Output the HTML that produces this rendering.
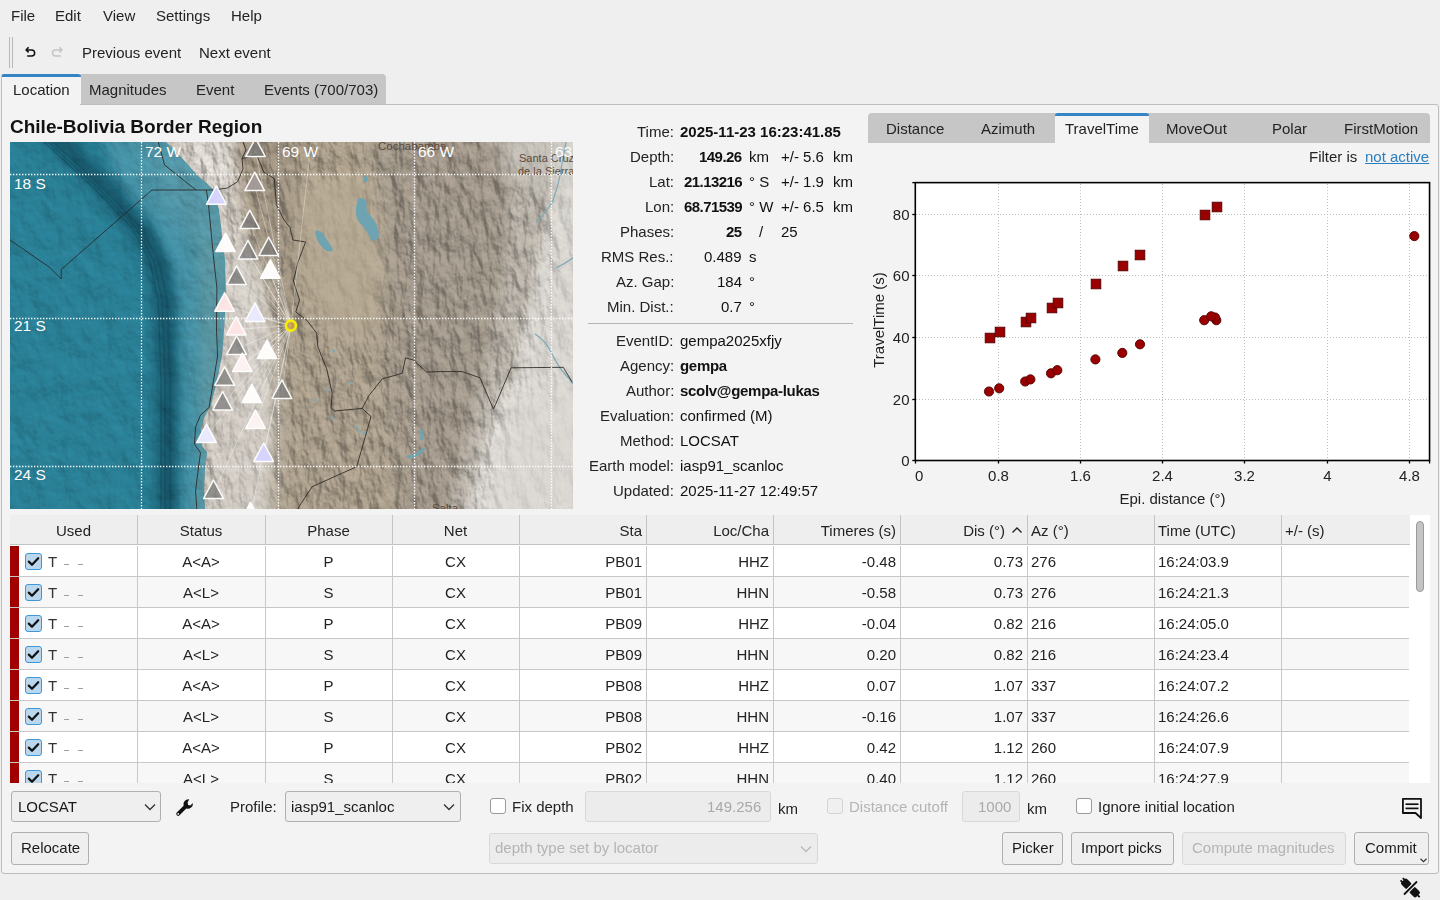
<!DOCTYPE html>
<html><head><meta charset="utf-8">
<style>
*{box-sizing:border-box;margin:0;padding:0}
html,body{width:1440px;height:900px;overflow:hidden;background:#efefef;font-family:"Liberation Sans",sans-serif;font-size:15px;color:#232323}
.a{position:absolute;white-space:nowrap}
.t{position:absolute;white-space:nowrap;line-height:18px;will-change:transform}
.r{text-align:right}
.c{text-align:center}
.b{font-weight:bold}
</style></head><body>
<!-- menubar -->
<div class="t" style="left:11px;top:7px">File</div>
<div class="t" style="left:55px;top:7px">Edit</div>
<div class="t" style="left:103px;top:7px">View</div>
<div class="t" style="left:156px;top:7px">Settings</div>
<div class="t" style="left:231px;top:7px">Help</div>
<!-- toolbar -->
<div class="a" style="left:9px;top:37px;width:1px;height:31px;background:#b8b8b8"></div>
<div class="a" style="left:12px;top:37px;width:1px;height:31px;background:#b8b8b8"></div>
<svg class="a" style="left:20px;top:40px" width="50" height="24" viewBox="20 40 50 24">
<path d="M28.6,47.2 L26.2,49.9 L28.6,52.4" fill="none" stroke="#111" stroke-width="1.6" stroke-linejoin="miter"/>
<path d="M26.6,49.9 H31.6 A3.05,3.05 0 0 1 31.6,56 H27.2" fill="none" stroke="#111" stroke-width="1.5"/>
<path d="M59.4,47.2 L61.8,49.9 L59.4,52.4" fill="none" stroke="#c4c4c4" stroke-width="1.6"/>
<path d="M61.4,49.9 H55.6 A3.05,3.05 0 0 0 55.6,56 H60.8" fill="none" stroke="#c4c4c4" stroke-width="1.5"/>
</svg>
<div class="t" style="left:82px;top:44px">Previous event</div>
<div class="t" style="left:199px;top:44px">Next event</div>

<!-- main tabs -->
<div class="a" style="left:80px;top:74px;width:306px;height:30px;background:#c6c6c6;border-radius:0 4px 0 0"></div>
<div class="a" style="left:1px;top:74px;width:80px;height:31px;background:#f3f3f3;border-top:3px solid #3584c6;border-left:1px solid #bdbdbd;border-radius:3px 3px 0 0"></div>
<div class="t" style="left:13px;top:81px">Location</div>
<div class="t" style="left:89px;top:81px">Magnitudes</div>
<div class="t" style="left:196px;top:81px">Event</div>
<div class="t" style="left:264px;top:81px">Events (700/703)</div>

<!-- panel -->
<div class="a" style="left:1px;top:104px;width:1438px;height:770px;background:#f3f3f3;border:1px solid #bdbdbd;border-radius:0 3px 3px 3px"></div>
<div class="a" style="left:2px;top:103px;width:78px;height:3px;background:#f3f3f3"></div>

<div class="t b" style="left:10px;top:116px;font-size:19px;line-height:22px;color:#111">Chile-Bolivia Border Region</div>

<div id="map" class="a" style="left:10px;top:142px;width:563px;height:367px;background:#3a8598;overflow:hidden"><svg width="563" height="367" viewBox="0 0 563 367" style="position:absolute;left:0;top:0;display:block">
<defs>
<filter id="b3" filterUnits="userSpaceOnUse" x="-60" y="-60" width="683" height="487"><feGaussianBlur stdDeviation="3"/></filter>
<filter id="b6" filterUnits="userSpaceOnUse" x="-60" y="-60" width="683" height="487"><feGaussianBlur stdDeviation="6"/></filter>
<filter id="b10" filterUnits="userSpaceOnUse" x="-60" y="-60" width="683" height="487"><feGaussianBlur stdDeviation="10"/></filter>
<filter id="b16" filterUnits="userSpaceOnUse" x="-60" y="-60" width="683" height="487"><feGaussianBlur stdDeviation="16"/></filter>
<filter id="texL" filterUnits="userSpaceOnUse" x="-60" y="-60" width="683" height="487"><feTurbulence type="turbulence" baseFrequency="0.11 0.035" numOctaves="3" seed="11"/><feColorMatrix type="matrix" values="0 0 0 0 0.36  0 0 0 0 0.32  0 0 0 0 0.27  2.2 0 0 0 -0.25"/></filter>
<filter id="texH" filterUnits="userSpaceOnUse" x="-60" y="-60" width="683" height="487"><feTurbulence type="fractalNoise" baseFrequency="0.06 0.06" numOctaves="3" seed="5"/><feColorMatrix type="matrix" values="0 0 0 0 0.4  0 0 0 0 0.35  0 0 0 0 0.3  2.5 0 0 0 -1.3"/></filter>
<filter id="texO" filterUnits="userSpaceOnUse" x="-60" y="-60" width="683" height="487"><feTurbulence type="fractalNoise" baseFrequency="0.09" numOctaves="4" seed="2"/><feColorMatrix type="matrix" values="0 0 0 0 0.05  0 0 0 0 0.28  0 0 0 0 0.34  1.8 0 0 0 -0.8"/></filter>
<filter id="reliefL" filterUnits="userSpaceOnUse" x="-60" y="-60" width="683" height="487"><feTurbulence type="fractalNoise" baseFrequency="0.09 0.04" numOctaves="5" seed="9" result="n"/><feDiffuseLighting in="n" surfaceScale="7" diffuseConstant="1" lighting-color="#ffffff" result="l"><feDistantLight azimuth="300" elevation="40"/></feDiffuseLighting><feComposite in="l" in2="SourceGraphic" operator="arithmetic" k1="0.75" k2="0" k3="0.5" k4="0"/></filter>
<filter id="reliefO" filterUnits="userSpaceOnUse" x="-60" y="-60" width="683" height="487"><feTurbulence type="fractalNoise" baseFrequency="0.05 0.04" numOctaves="4" seed="4" result="n"/><feDiffuseLighting in="n" surfaceScale="4" diffuseConstant="1" lighting-color="#ffffff" result="l"><feDistantLight azimuth="300" elevation="45"/></feDiffuseLighting><feComposite in="l" in2="SourceGraphic" operator="arithmetic" k1="0.6" k2="0" k3="0.58" k4="0"/></filter>
<linearGradient id="oc" x1="0" y1="0" x2="1" y2="0">
<stop offset="0" stop-color="#2a7e93"/><stop offset="0.45" stop-color="#2e8398"/><stop offset="0.8" stop-color="#3a8da2"/><stop offset="1" stop-color="#4a98aa"/></linearGradient>
<clipPath id="landclip"><polygon points="156.0,0.0 172.0,16.0 187.0,33.0 203.0,47.0 209.0,68.0 212.0,93.0 215.0,118.0 216.0,158.0 214.0,188.0 212.0,214.0 206.0,243.0 201.0,263.0 194.0,276.0 191.0,288.0 192.0,304.0 197.0,310.0 195.0,328.0 194.0,348.0 195.0,367.0 563.0,367.0 563.0,0.0"/></clipPath>
<clipPath id="oceanclip"><polygon points="0.0,0.0 156.0,0.0 172.0,16.0 187.0,33.0 203.0,47.0 209.0,68.0 212.0,93.0 215.0,118.0 216.0,158.0 214.0,188.0 212.0,214.0 206.0,243.0 201.0,263.0 194.0,276.0 191.0,288.0 192.0,304.0 197.0,310.0 195.0,328.0 194.0,348.0 195.0,367.0 0.0,367.0"/></clipPath>
</defs>
<g clip-path="url(#oceanclip)"><g filter="url(#reliefO)">
<rect x="-10" y="-10" width="583" height="387" fill="#2a7f95"/>
<polygon points="90.0,-12.0 220.0,-12.0 222.0,378.0 168.0,378.0 168.0,238.0 165.0,158.0 158.0,120.0 142.0,86.0 112.0,50.0" fill="#4490a4" opacity="1" filter="url(#b6)"/>
<polygon points="165.0,-12.0 220.0,-12.0 222.0,378.0 190.0,378.0 188.0,158.0 180.0,78.0" fill="#54939f" opacity="0.75" filter="url(#b6)"/>
<polygon points="188.0,43.0 220.0,43.0 220.0,378.0 188.0,378.0 193.0,158.0" fill="#5e98a4" opacity="0.6" filter="url(#b3)"/>
<polygon points="130.0,-12.0 190.0,-12.0 210.0,48.0 212.0,98.0 180.0,98.0 150.0,58.0" fill="#5697a7" opacity="0.8" filter="url(#b10)"/>
<polyline points="35.0,-12.0 50.0,0.0 98.0,50.0 131.0,90.0 147.0,123.0 154.0,158.0 156.0,238.0 156.0,378.0" fill="none" stroke="#1a6174" stroke-width="24" opacity="1" filter="url(#b6)"/>
<polyline points="37.0,-12.0 52.0,0.0 100.0,51.0 133.0,91.0 149.0,124.0 156.0,160.0 159.0,238.0 159.0,378.0" fill="none" stroke="#145366" stroke-width="9" opacity="0.8" filter="url(#b3)"/>
<polyline points="34.0,0.0 84.0,46.0 122.0,86.0 140.0,120.0 148.0,158.0 151.0,238.0 151.0,378.0" fill="none" stroke="#104b5b" stroke-width="1.3" opacity="0.55"/>
<polyline points="38.0,0.0 88.0,46.0 126.0,86.0 144.0,120.0 152.0,158.0 155.0,238.0 155.0,378.0" fill="none" stroke="#104b5b" stroke-width="1.3" opacity="0.55"/>
<polyline points="43.0,0.0 93.0,46.0 131.0,86.0 149.0,120.0 157.0,158.0 160.0,238.0 160.0,378.0" fill="none" stroke="#104b5b" stroke-width="1.3" opacity="0.55"/>
</g></g>
<g clip-path="url(#landclip)"><g filter="url(#reliefL)">
<rect x="-10" y="-10" width="583" height="387" fill="#ab9f8b"/>
<polygon points="362.0,-12.0 538.0,-12.0 530.0,108.0 510.0,204.0 485.0,278.0 472.0,378.0 390.0,378.0 375.0,278.0 370.0,188.0 362.0,108.0" fill="#a1978a" opacity="0.9" filter="url(#b10)"/>
<polygon points="410.0,58.0 520.0,48.0 510.0,188.0 480.0,258.0 430.0,258.0 410.0,158.0" fill="#9f978a" opacity="0.5" filter="url(#b16)"/>
<polygon points="498.0,-12.0 560.0,-12.0 538.0,108.0 516.0,198.0 494.0,278.0 474.0,378.0 436.0,378.0 458.0,288.0 484.0,188.0 498.0,98.0" fill="#bdb8b0" opacity="0.75" filter="url(#b6)"/>
<polygon points="546.0,-12.0 590.0,-12.0 590.0,378.0 456.0,378.0 478.0,298.0 502.0,238.0 520.0,158.0 538.0,78.0" fill="#d8d5d0" filter="url(#b6)"/>
<polygon points="490.0,253.0 590.0,238.0 590.0,378.0 470.0,378.0" fill="#dbd8d3" opacity="0.9" filter="url(#b10)"/>
<polygon points="290.0,48.0 355.0,23.0 368.0,108.0 362.0,188.0 320.0,188.0 295.0,118.0" fill="#bdb09a" opacity="0.8" filter="url(#b10)"/>
<polygon points="275.0,178.0 370.0,188.0 385.0,378.0 260.0,378.0 265.0,278.0" fill="#a89c8c" opacity="0.45" filter="url(#b16)"/>
<polygon points="222.0,-12.0 290.0,-12.0 288.0,108.0 280.0,188.0 262.0,188.0 252.0,108.0 238.0,58.0" fill="#968a7a" opacity="0.6" filter="url(#b10)"/>
<polygon points="150.0,-12.0 225.0,-12.0 230.0,48.0 242.0,118.0 258.0,188.0 262.0,278.0 258.0,378.0 190.0,378.0 190.0,158.0" fill="#cfc9c1" opacity="0.95" filter="url(#b6)"/>
<polygon points="170.0,-2.0 215.0,-2.0 222.0,43.0 205.0,58.0" fill="#e2ded8" opacity="0.7" filter="url(#b6)"/>
<polygon points="225.0,128.0 252.0,128.0 260.0,258.0 235.0,258.0" fill="#dcd7d0" opacity="0.6" filter="url(#b10)"/>
</g>
<polygon points="282.0,48.0 355.0,26.0 372.0,108.0 366.0,193.0 328.0,200.0 292.0,148.0" fill="#b5a893" opacity="0.75" filter="url(#b10)"/>
<polygon points="552.0,-12.0 590.0,-12.0 590.0,378.0 468.0,378.0 488.0,298.0 510.0,238.0 528.0,158.0 544.0,78.0" fill="#d9d6d1" opacity="0.6" filter="url(#b10)"/>
<polygon points="505.0,258.0 590.0,248.0 590.0,378.0 485.0,378.0" fill="#dcd9d4" opacity="0.5" filter="url(#b10)"/>
<polygon points="212.0,108.0 252.0,108.0 265.0,188.0 270.0,278.0 262.0,378.0 205.0,378.0 210.0,258.0" fill="#d6d1ca" opacity="0.45" filter="url(#b10)"/>
<polygon points="478.0,-12.0 590.0,-12.0 590.0,43.0 530.0,48.0 495.0,23.0" fill="#cfccc6" opacity="0.6" filter="url(#b10)"/>
</g>
<path d="M348,57 q6,-3 9,4 q-2,6 2,11 q10,10 10,22 q-2,6 -8,4 q-4,-10 -12,-18 q-6,-8 -1,-23z" fill="#6ea3b1"/>
<path d="M305,89 q6,-2 10,6 q6,8 8,13 q-4,4 -10,-2 q-8,-8 -8,-17z" fill="#6ea3b1"/>
<path d="M353,34 q4,-1 5,3 q-1,4 -4,3z" fill="#6ea3b1"/>
<path d="M411,288 q2,6 0,10 M414,306 q-4,7 -16,9" fill="none" stroke="#6ea3b1" stroke-width="3"/>
<circle cx="324" cy="209" r="1.6" fill="#7ea8b4"/>
<circle cx="318" cy="248" r="1.6" fill="#7ea8b4"/>
<circle cx="322" cy="276" r="1.6" fill="#7ea8b4"/>
<circle cx="341" cy="241" r="1.6" fill="#7ea8b4"/>
<circle cx="354" cy="291" r="1.6" fill="#7ea8b4"/>
<circle cx="305" cy="258" r="1.6" fill="#7ea8b4"/>
<circle cx="347" cy="285" r="1.6" fill="#7ea8b4"/>
<circle cx="350" cy="289" r="1.6" fill="#7ea8b4"/>
<path d="M526,80 L534,72 L542,61 L547,46 L550,34 L553,16 L556,0" fill="none" stroke="#79a9b6" stroke-width="1.1"/>
<path d="M546,126 q8,-4 17,-10" fill="none" stroke="#79a9b6" stroke-width="1.2"/>
<path d="M525,192 q10,6 16,18 q8,16 14,22 q4,4 8,10" fill="none" stroke="#79a9b6" stroke-width="1.2"/>
<polyline points="196.4,48.0 203.7,48.0 217.3,46.0 227.7,39.7 233.0,27.0 232.0,16.7 246.5,12.5 253.9,30.3 264.3,36.6 266.4,62.7 273.7,77.3 280.0,85.7 283.0,98.0 295.6,100.0 288.0,120.0 283.4,139.0 289.5,158.0 285.8,170.0 296.7,178.0 306.7,191.3 307.8,204.7 316.7,226.9 322.2,251.3 321.0,265.8 324.4,269.0 352.2,266.4 361.0,274.7 346.7,324.7 302.2,344.7 288.9,364.7 287.0,370.0" fill="none" stroke="#2b2723" stroke-width="1" opacity="0.85" stroke-linejoin="round"/>
<polyline points="352.2,266.4 358.9,253.6 372.2,236.9 392.2,231.3 395.6,215.8 403.3,218.0 416.7,230.2 427.8,229.6 452.2,229.6 470.0,235.8 483.3,266.9 485.6,262.4 501.1,225.8 553.3,225.3 562.2,240.2" fill="none" stroke="#2b2723" stroke-width="1" opacity="0.85" stroke-linejoin="round"/>
<polyline points="196.4,48.0 198.5,62.7 203.7,117.0 206.9,146.0 206.5,188.0 207.6,214.0 199.0,265.6 190.5,273.0 185.6,285.0 184.4,302.0 190.5,310.8 188.0,329.0 185.6,348.7 186.8,367.0" fill="none" stroke="#2b2723" stroke-width="1" opacity="0.85" stroke-linejoin="round"/>
<polyline points="0.0,98.0 39.7,125.4 51.2,137.0 51.2,127.5 142.0,48.0 196.4,48.0" fill="none" stroke="#2b2723" stroke-width="1" opacity="0.85" stroke-linejoin="round"/>
<polyline points="148.3,0.0 154.6,23.0 186.0,48.0" fill="none" stroke="#2b2723" stroke-width="1" opacity="0.85" stroke-linejoin="round"/>
<polyline points="233.0,0.0 236.0,8.0 232.0,16.7" fill="none" stroke="#2b2723" stroke-width="1" opacity="0.85" stroke-linejoin="round"/>
<text x="368" y="8" font-family="Liberation Sans" font-size="11.5" fill="#5b4a3d">Cochabamba</text>
<text x="509" y="20" font-family="Liberation Sans" font-size="11" fill="#5b4a3d">Santa Cruz</text>
<text x="508" y="33" font-family="Liberation Sans" font-size="11" fill="#5b4a3d">de la Sierra</text>
<text x="422" y="370" font-family="Liberation Sans" font-size="11.5" fill="#5b4a3d">Salta</text>
<line x1="131.5" y1="0" x2="131.5" y2="367" stroke="#fff" stroke-width="1.3" stroke-dasharray="1.4,1.6" opacity="0.95"/>
<line x1="268.5" y1="0" x2="268.5" y2="367" stroke="#fff" stroke-width="1.3" stroke-dasharray="1.4,1.6" opacity="0.95"/>
<line x1="404.5" y1="0" x2="404.5" y2="367" stroke="#fff" stroke-width="1.3" stroke-dasharray="1.4,1.6" opacity="0.95"/>
<line x1="541.5" y1="0" x2="541.5" y2="367" stroke="#fff" stroke-width="1.3" stroke-dasharray="1.4,1.6" opacity="0.95"/>
<line x1="0" y1="32.5" x2="563" y2="32.5" stroke="#fff" stroke-width="1.3" stroke-dasharray="1.4,1.6" opacity="0.95"/>
<line x1="0" y1="176.5" x2="563" y2="176.5" stroke="#fff" stroke-width="1.3" stroke-dasharray="1.4,1.6" opacity="0.95"/>
<line x1="0" y1="324.5" x2="563" y2="324.5" stroke="#fff" stroke-width="1.3" stroke-dasharray="1.4,1.6" opacity="0.95"/>
<text x="135" y="15" font-family="Liberation Sans" font-size="15.5" fill="#fff">72 W</text>
<text x="272" y="15" font-family="Liberation Sans" font-size="15.5" fill="#fff">69 W</text>
<text x="408" y="15" font-family="Liberation Sans" font-size="15.5" fill="#fff">66 W</text>
<text x="545" y="15" font-family="Liberation Sans" font-size="15.5" fill="#fff">63</text>
<text x="4" y="46.5" font-family="Liberation Sans" font-size="15.5" fill="#fff">18 S</text>
<text x="4" y="189" font-family="Liberation Sans" font-size="15.5" fill="#fff">21 S</text>
<text x="4" y="338" font-family="Liberation Sans" font-size="15.5" fill="#fff">24 S</text>
<line x1="280.9" y1="183.60000000000002" x2="245.5" y2="9" stroke="rgba(255,255,255,0.4)" stroke-width="0.85"/>
<line x1="280.9" y1="183.60000000000002" x2="244.7" y2="43" stroke="rgba(255,255,255,0.4)" stroke-width="0.85"/>
<line x1="280.9" y1="183.60000000000002" x2="206.4" y2="56.599999999999994" stroke="rgba(255,255,255,0.4)" stroke-width="0.85"/>
<line x1="280.9" y1="183.60000000000002" x2="239.8" y2="81" stroke="rgba(255,255,255,0.4)" stroke-width="0.85"/>
<line x1="280.9" y1="183.60000000000002" x2="215.5" y2="104" stroke="rgba(255,255,255,0.4)" stroke-width="0.85"/>
<line x1="280.9" y1="183.60000000000002" x2="238" y2="111.30000000000001" stroke="rgba(255,255,255,0.4)" stroke-width="0.85"/>
<line x1="280.9" y1="183.60000000000002" x2="258.7" y2="108" stroke="rgba(255,255,255,0.4)" stroke-width="0.85"/>
<line x1="280.9" y1="183.60000000000002" x2="260.3" y2="130.60000000000002" stroke="rgba(255,255,255,0.4)" stroke-width="0.85"/>
<line x1="280.9" y1="183.60000000000002" x2="226.6" y2="136.8" stroke="rgba(255,255,255,0.4)" stroke-width="0.85"/>
<line x1="280.9" y1="183.60000000000002" x2="214.6" y2="163.60000000000002" stroke="rgba(255,255,255,0.4)" stroke-width="0.85"/>
<line x1="280.9" y1="183.60000000000002" x2="245" y2="173.8" stroke="rgba(255,255,255,0.4)" stroke-width="0.85"/>
<line x1="280.9" y1="183.60000000000002" x2="226.2" y2="187.39999999999998" stroke="rgba(255,255,255,0.4)" stroke-width="0.85"/>
<line x1="280.9" y1="183.60000000000002" x2="226.6" y2="206.8" stroke="rgba(255,255,255,0.4)" stroke-width="0.85"/>
<line x1="280.9" y1="183.60000000000002" x2="257" y2="211" stroke="rgba(255,255,255,0.4)" stroke-width="0.85"/>
<line x1="280.9" y1="183.60000000000002" x2="232.3" y2="224" stroke="rgba(255,255,255,0.4)" stroke-width="0.85"/>
<line x1="280.9" y1="183.60000000000002" x2="214.6" y2="237.60000000000002" stroke="rgba(255,255,255,0.4)" stroke-width="0.85"/>
<line x1="280.9" y1="183.60000000000002" x2="271.9" y2="250.8" stroke="rgba(255,255,255,0.4)" stroke-width="0.85"/>
<line x1="280.9" y1="183.60000000000002" x2="241.8" y2="255" stroke="rgba(255,255,255,0.4)" stroke-width="0.85"/>
<line x1="280.9" y1="183.60000000000002" x2="212.6" y2="262.3" stroke="rgba(255,255,255,0.4)" stroke-width="0.85"/>
<line x1="280.9" y1="183.60000000000002" x2="245.5" y2="280.8" stroke="rgba(255,255,255,0.4)" stroke-width="0.85"/>
<line x1="280.9" y1="183.60000000000002" x2="196.5" y2="294.8" stroke="rgba(255,255,255,0.4)" stroke-width="0.85"/>
<line x1="280.9" y1="183.60000000000002" x2="253.7" y2="313.8" stroke="rgba(255,255,255,0.4)" stroke-width="0.85"/>
<line x1="280.9" y1="183.60000000000002" x2="203.5" y2="350.8" stroke="rgba(255,255,255,0.4)" stroke-width="0.85"/>
<line x1="280.9" y1="183.60000000000002" x2="240.6" y2="373" stroke="rgba(255,255,255,0.4)" stroke-width="0.85"/>
<line x1="280.9" y1="183.60000000000002" x2="302" y2="-9" stroke="rgba(255,255,255,0.4)" stroke-width="0.85"/>
<polygon points="245.5,-3.8 255.3,14.6 235.7,14.6" fill="rgba(112,112,112,0.66)" stroke="rgba(255,255,255,0.95)" stroke-width="1.5" stroke-linejoin="round"/>
<polygon points="244.7,30.2 254.5,48.6 234.9,48.6" fill="rgba(165,155,155,0.88)" stroke="rgba(255,255,255,0.95)" stroke-width="1.5" stroke-linejoin="round"/>
<polygon points="206.4,43.8 216.2,62.2 196.6,62.2" fill="rgba(214,212,254,0.98)" stroke="rgba(255,255,255,0.95)" stroke-width="1.5" stroke-linejoin="round"/>
<polygon points="239.8,68.2 249.6,86.6 230.0,86.6" fill="rgba(112,112,112,0.66)" stroke="rgba(255,255,255,0.95)" stroke-width="1.5" stroke-linejoin="round"/>
<polygon points="215.5,91.2 225.3,109.6 205.7,109.6" fill="rgba(255,253,252,0.98)" stroke="rgba(255,255,255,0.95)" stroke-width="1.5" stroke-linejoin="round"/>
<polygon points="238.0,98.5 247.8,116.9 228.2,116.9" fill="rgba(112,112,112,0.66)" stroke="rgba(255,255,255,0.95)" stroke-width="1.5" stroke-linejoin="round"/>
<polygon points="258.7,95.2 268.5,113.6 248.9,113.6" fill="rgba(112,112,112,0.66)" stroke="rgba(255,255,255,0.95)" stroke-width="1.5" stroke-linejoin="round"/>
<polygon points="260.3,117.8 270.1,136.2 250.5,136.2" fill="rgba(255,253,252,0.98)" stroke="rgba(255,255,255,0.95)" stroke-width="1.5" stroke-linejoin="round"/>
<polygon points="226.6,124.0 236.4,142.4 216.8,142.4" fill="rgba(112,112,112,0.66)" stroke="rgba(255,255,255,0.95)" stroke-width="1.5" stroke-linejoin="round"/>
<polygon points="214.6,150.8 224.4,169.2 204.8,169.2" fill="rgba(254,230,230,0.98)" stroke="rgba(255,255,255,0.95)" stroke-width="1.5" stroke-linejoin="round"/>
<polygon points="245.0,161.0 254.8,179.4 235.2,179.4" fill="rgba(234,234,254,0.98)" stroke="rgba(255,255,255,0.95)" stroke-width="1.5" stroke-linejoin="round"/>
<polygon points="226.2,174.6 236.0,193.0 216.4,193.0" fill="rgba(254,230,230,0.98)" stroke="rgba(255,255,255,0.95)" stroke-width="1.5" stroke-linejoin="round"/>
<polygon points="226.6,194.0 236.4,212.4 216.8,212.4" fill="rgba(112,112,112,0.66)" stroke="rgba(255,255,255,0.95)" stroke-width="1.5" stroke-linejoin="round"/>
<polygon points="257.0,198.2 266.8,216.6 247.2,216.6" fill="rgba(255,253,252,0.98)" stroke="rgba(255,255,255,0.95)" stroke-width="1.5" stroke-linejoin="round"/>
<polygon points="232.3,211.2 242.1,229.6 222.5,229.6" fill="rgba(254,243,242,0.98)" stroke="rgba(255,255,255,0.95)" stroke-width="1.5" stroke-linejoin="round"/>
<polygon points="214.6,224.8 224.4,243.2 204.8,243.2" fill="rgba(112,112,112,0.66)" stroke="rgba(255,255,255,0.95)" stroke-width="1.5" stroke-linejoin="round"/>
<polygon points="271.9,238.0 281.7,256.4 262.1,256.4" fill="rgba(112,112,112,0.66)" stroke="rgba(255,255,255,0.95)" stroke-width="1.5" stroke-linejoin="round"/>
<polygon points="241.8,242.2 251.6,260.6 232.0,260.6" fill="rgba(255,253,252,0.98)" stroke="rgba(255,255,255,0.95)" stroke-width="1.5" stroke-linejoin="round"/>
<polygon points="212.6,249.5 222.4,267.9 202.8,267.9" fill="rgba(112,112,112,0.66)" stroke="rgba(255,255,255,0.95)" stroke-width="1.5" stroke-linejoin="round"/>
<polygon points="245.5,268.0 255.3,286.4 235.7,286.4" fill="rgba(254,243,242,0.98)" stroke="rgba(255,255,255,0.95)" stroke-width="1.5" stroke-linejoin="round"/>
<polygon points="196.5,282.0 206.3,300.4 186.7,300.4" fill="rgba(234,234,254,0.98)" stroke="rgba(255,255,255,0.95)" stroke-width="1.5" stroke-linejoin="round"/>
<polygon points="253.7,301.0 263.5,319.4 243.9,319.4" fill="rgba(214,212,254,0.98)" stroke="rgba(255,255,255,0.95)" stroke-width="1.5" stroke-linejoin="round"/>
<polygon points="203.5,338.0 213.3,356.4 193.7,356.4" fill="rgba(112,112,112,0.66)" stroke="rgba(255,255,255,0.95)" stroke-width="1.5" stroke-linejoin="round"/>
<polygon points="240.6,360.2 250.4,378.6 230.8,378.6" fill="rgba(255,253,252,0.98)" stroke="rgba(255,255,255,0.95)" stroke-width="1.5" stroke-linejoin="round"/>
<circle cx="280.9" cy="183.60000000000002" r="5" fill="rgba(200,150,70,0.8)" stroke="#f4f000" stroke-width="2.6"/>
</svg></div>

<div class="t r" style="right:766px;top:122.5px">Time:</div>
<div class="t b" style="left:680px;top:122.5px;color:#111">2025-11-23 16:23:41.85</div>
<div class="t r" style="right:766px;top:147.5px">Depth:</div>
<div class="t r b" style="right:698px;top:147.5px;color:#111;letter-spacing:-0.55px;">149.26</div>
<div class="t " style="left:749px;top:147.5px;color:#111">km</div>
<div class="t " style="left:781px;top:147.5px;color:#111">+/- 5.6</div>
<div class="t " style="left:833px;top:147.5px;color:#111">km</div>
<div class="t r" style="right:766px;top:172.5px">Lat:</div>
<div class="t r b" style="right:698px;top:172.5px;color:#111;letter-spacing:-0.55px;">21.13216</div>
<div class="t " style="left:749px;top:172.5px;color:#111">° S</div>
<div class="t " style="left:781px;top:172.5px;color:#111">+/- 1.9</div>
<div class="t " style="left:833px;top:172.5px;color:#111">km</div>
<div class="t r" style="right:766px;top:197.5px">Lon:</div>
<div class="t r b" style="right:698px;top:197.5px;color:#111;letter-spacing:-0.55px;">68.71539</div>
<div class="t " style="left:749px;top:197.5px;color:#111">° W</div>
<div class="t " style="left:781px;top:197.5px;color:#111">+/- 6.5</div>
<div class="t " style="left:833px;top:197.5px;color:#111">km</div>
<div class="t r" style="right:766px;top:222.5px">Phases:</div>
<div class="t r b" style="right:698px;top:222.5px;color:#111;letter-spacing:-0.55px;">25</div>
<div class="t " style="left:759px;top:222.5px;color:#111">/</div>
<div class="t " style="left:781px;top:222.5px;color:#111">25</div>
<div class="t r" style="right:766px;top:247.5px">RMS Res.:</div>
<div class="t r " style="right:698px;top:247.5px;color:#111;">0.489</div>
<div class="t " style="left:749px;top:247.5px;color:#111">s</div>
<div class="t r" style="right:766px;top:272.5px">Az. Gap:</div>
<div class="t r " style="right:698px;top:272.5px;color:#111;">184</div>
<div class="t " style="left:749px;top:272.5px;color:#111">°</div>
<div class="t r" style="right:766px;top:297.5px">Min. Dist.:</div>
<div class="t r " style="right:698px;top:297.5px;color:#111;">0.7</div>
<div class="t " style="left:749px;top:297.5px;color:#111">°</div>
<div class="a" style="left:588px;top:323px;width:265px;height:1px;background:#b4b4b4"></div>
<div class="t r" style="right:766px;top:331.8px">EventID:</div>
<div class="t " style="left:680px;top:331.8px;color:#111;">gempa2025xfjy</div>
<div class="t r" style="right:766px;top:356.8px">Agency:</div>
<div class="t b" style="left:680px;top:356.8px;color:#111;letter-spacing:-0.3px;">gempa</div>
<div class="t r" style="right:766px;top:381.7px">Author:</div>
<div class="t b" style="left:680px;top:381.7px;color:#111;letter-spacing:-0.3px;">scolv@gempa-lukas</div>
<div class="t r" style="right:766px;top:406.7px">Evaluation:</div>
<div class="t " style="left:680px;top:406.7px;color:#111;">confirmed (M)</div>
<div class="t r" style="right:766px;top:431.6px">Method:</div>
<div class="t " style="left:680px;top:431.6px;color:#111;">LOCSAT</div>
<div class="t r" style="right:766px;top:456.6px">Earth model:</div>
<div class="t " style="left:680px;top:456.6px;color:#111;">iasp91_scanloc</div>
<div class="t r" style="right:766px;top:481.5px">Updated:</div>
<div class="t " style="left:680px;top:481.5px;color:#111;">2025-11-27 12:49:57</div>
<div class="a" style="left:868px;top:113px;width:562px;height:30px;background:#c6c6c6;border-radius:4px 4px 0 0"></div>
<div class="a" style="left:1055px;top:113px;width:94px;height:31px;background:#f3f3f3;border-top:3px solid #3584c6;border-radius:3px 3px 0 0"></div>
<div class="t" style="left:886px;top:119.5px">Distance</div>
<div class="t" style="left:981px;top:119.5px">Azimuth</div>
<div class="t" style="left:1065px;top:119.5px">TravelTime</div>
<div class="t" style="left:1166px;top:119.5px">MoveOut</div>
<div class="t" style="left:1272px;top:119.5px">Polar</div>
<div class="t" style="left:1344px;top:119.5px">FirstMotion</div>
<div class="t" style="left:1309px;top:147.5px">Filter is</div>
<div class="t" style="left:1365px;top:147.5px;color:#2a7fc0;text-decoration:underline">not active</div>
<svg class="a" style="left:860px;top:170px;will-change:transform" width="580" height="350" viewBox="0 0 580 350">
<rect x="55.299999999999955" y="12.625" width="514.25" height="277.875" fill="#fff"/>
<line x1="138.5" y1="14" x2="138.5" y2="290.5" stroke="#bdbdbd" stroke-width="1" stroke-dasharray="1,2"/>
<line x1="220.5" y1="14" x2="220.5" y2="290.5" stroke="#bdbdbd" stroke-width="1" stroke-dasharray="1,2"/>
<line x1="302.5" y1="14" x2="302.5" y2="290.5" stroke="#bdbdbd" stroke-width="1" stroke-dasharray="1,2"/>
<line x1="384.5" y1="14" x2="384.5" y2="290.5" stroke="#bdbdbd" stroke-width="1" stroke-dasharray="1,2"/>
<line x1="467.5" y1="14" x2="467.5" y2="290.5" stroke="#bdbdbd" stroke-width="1" stroke-dasharray="1,2"/>
<line x1="549.5" y1="14" x2="549.5" y2="290.5" stroke="#bdbdbd" stroke-width="1" stroke-dasharray="1,2"/>
<line x1="56" y1="229.5" x2="569.55" y2="229.5" stroke="#bdbdbd" stroke-width="1" stroke-dasharray="1,2"/>
<line x1="56" y1="167.5" x2="569.55" y2="167.5" stroke="#bdbdbd" stroke-width="1" stroke-dasharray="1,2"/>
<line x1="56" y1="105.5" x2="569.55" y2="105.5" stroke="#bdbdbd" stroke-width="1" stroke-dasharray="1,2"/>
<line x1="56" y1="44.5" x2="569.55" y2="44.5" stroke="#bdbdbd" stroke-width="1" stroke-dasharray="1,2"/>
<rect x="55.299999999999955" y="12.625" width="514.25" height="277.875" fill="none" stroke="#000" stroke-width="1.6"/>
<line x1="52.299999999999955" y1="290.5" x2="55.299999999999955" y2="290.5" stroke="#000" stroke-width="1.3"/>
<text x="49.5" y="296.0" text-anchor="end" font-family="Liberation Sans" font-size="15" fill="#222">0</text>
<line x1="52.299999999999955" y1="229.5" x2="55.299999999999955" y2="229.5" stroke="#000" stroke-width="1.3"/>
<text x="49.5" y="235.0" text-anchor="end" font-family="Liberation Sans" font-size="15" fill="#222">20</text>
<line x1="52.299999999999955" y1="167.5" x2="55.299999999999955" y2="167.5" stroke="#000" stroke-width="1.3"/>
<text x="49.5" y="173.0" text-anchor="end" font-family="Liberation Sans" font-size="15" fill="#222">40</text>
<line x1="52.299999999999955" y1="105.5" x2="55.299999999999955" y2="105.5" stroke="#000" stroke-width="1.3"/>
<text x="49.5" y="111.0" text-anchor="end" font-family="Liberation Sans" font-size="15" fill="#222">60</text>
<line x1="52.299999999999955" y1="44.5" x2="55.299999999999955" y2="44.5" stroke="#000" stroke-width="1.3"/>
<text x="49.5" y="50.0" text-anchor="end" font-family="Liberation Sans" font-size="15" fill="#222">80</text>
<line x1="52.299999999999955" y1="12.625" x2="55.299999999999955" y2="12.625" stroke="#000" stroke-width="1.3"/>
<line x1="55.5" y1="290.5" x2="55.5" y2="293.5" stroke="#000" stroke-width="1.3"/>
<text x="55" y="311" font-family="Liberation Sans" font-size="15" fill="#222">0</text>
<line x1="138.5" y1="290.5" x2="138.5" y2="293.5" stroke="#000" stroke-width="1.3"/>
<text x="138.5" y="311" text-anchor="middle" font-family="Liberation Sans" font-size="15" fill="#222">0.8</text>
<line x1="220.5" y1="290.5" x2="220.5" y2="293.5" stroke="#000" stroke-width="1.3"/>
<text x="220.5" y="311" text-anchor="middle" font-family="Liberation Sans" font-size="15" fill="#222">1.6</text>
<line x1="302.5" y1="290.5" x2="302.5" y2="293.5" stroke="#000" stroke-width="1.3"/>
<text x="302.5" y="311" text-anchor="middle" font-family="Liberation Sans" font-size="15" fill="#222">2.4</text>
<line x1="384.5" y1="290.5" x2="384.5" y2="293.5" stroke="#000" stroke-width="1.3"/>
<text x="384.5" y="311" text-anchor="middle" font-family="Liberation Sans" font-size="15" fill="#222">3.2</text>
<line x1="467.5" y1="290.5" x2="467.5" y2="293.5" stroke="#000" stroke-width="1.3"/>
<text x="467.5" y="311" text-anchor="middle" font-family="Liberation Sans" font-size="15" fill="#222">4</text>
<line x1="549.5" y1="290.5" x2="549.5" y2="293.5" stroke="#000" stroke-width="1.3"/>
<text x="549.5" y="311" text-anchor="middle" font-family="Liberation Sans" font-size="15" fill="#222">4.8</text>
<line x1="569.55" y1="290.5" x2="569.55" y2="293.5" stroke="#000" stroke-width="1.3"/>
<text x="312.5" y="333.5" text-anchor="middle" font-family="Liberation Sans" font-size="15" fill="#222">Epi. distance (°)</text>
<text transform="translate(24,150) rotate(-90)" text-anchor="middle" font-family="Liberation Sans" font-size="15" fill="#222">TravelTime (s)</text>
<rect x="125.2" y="163.2" width="9.6" height="9.6" fill="#9a0000" stroke="#520000" stroke-width="0.9"/>
<rect x="135.2" y="157.2" width="9.6" height="9.6" fill="#9a0000" stroke="#520000" stroke-width="0.9"/>
<rect x="161.2" y="147.2" width="9.6" height="9.6" fill="#9a0000" stroke="#520000" stroke-width="0.9"/>
<rect x="166.2" y="143.2" width="9.6" height="9.6" fill="#9a0000" stroke="#520000" stroke-width="0.9"/>
<rect x="187.2" y="133.2" width="9.6" height="9.6" fill="#9a0000" stroke="#520000" stroke-width="0.9"/>
<rect x="193.2" y="128.2" width="9.6" height="9.6" fill="#9a0000" stroke="#520000" stroke-width="0.9"/>
<rect x="231.2" y="109.2" width="9.6" height="9.6" fill="#9a0000" stroke="#520000" stroke-width="0.9"/>
<rect x="258.2" y="91.2" width="9.6" height="9.6" fill="#9a0000" stroke="#520000" stroke-width="0.9"/>
<rect x="275.2" y="80.2" width="9.6" height="9.6" fill="#9a0000" stroke="#520000" stroke-width="0.9"/>
<rect x="340.2" y="40.2" width="9.6" height="9.6" fill="#9a0000" stroke="#520000" stroke-width="0.9"/>
<rect x="352.2" y="32.2" width="9.6" height="9.6" fill="#9a0000" stroke="#520000" stroke-width="0.9"/>
<circle cx="129" cy="221.5" r="4.6" fill="#9a0000" stroke="#520000" stroke-width="0.9"/>
<circle cx="139.20000000000005" cy="218.3" r="4.6" fill="#9a0000" stroke="#520000" stroke-width="0.9"/>
<circle cx="165.20000000000005" cy="211.5" r="4.6" fill="#9a0000" stroke="#520000" stroke-width="0.9"/>
<circle cx="170.4000000000001" cy="209.39999999999998" r="4.6" fill="#9a0000" stroke="#520000" stroke-width="0.9"/>
<circle cx="191" cy="203.3" r="4.6" fill="#9a0000" stroke="#520000" stroke-width="0.9"/>
<circle cx="197.29999999999995" cy="200.2" r="4.6" fill="#9a0000" stroke="#520000" stroke-width="0.9"/>
<circle cx="235.4000000000001" cy="189.39999999999998" r="4.6" fill="#9a0000" stroke="#520000" stroke-width="0.9"/>
<circle cx="262.29999999999995" cy="182.89999999999998" r="4.6" fill="#9a0000" stroke="#520000" stroke-width="0.9"/>
<circle cx="280" cy="174.3" r="4.6" fill="#9a0000" stroke="#520000" stroke-width="0.9"/>
<circle cx="344.20000000000005" cy="150.2" r="4.6" fill="#9a0000" stroke="#520000" stroke-width="0.9"/>
<circle cx="356.29999999999995" cy="150.2" r="4.6" fill="#9a0000" stroke="#520000" stroke-width="0.9"/>
<circle cx="355" cy="147.5" r="4.6" fill="#9a0000" stroke="#520000" stroke-width="0.9"/>
<circle cx="351.20000000000005" cy="146.3" r="4.6" fill="#9a0000" stroke="#520000" stroke-width="0.9"/>
<circle cx="554.3" cy="66.1" r="4.6" fill="#9a0000" stroke="#520000" stroke-width="0.9"/>
</svg>
<div class="a" style="left:10px;top:515px;width:1420px;height:268px;overflow:hidden;background:#fff">
<div class="a" style="left:0;top:0;width:1400px;height:30px;background:#eeeeee;border-bottom:1px solid #c4c4c4"></div>
<div class="t c" style="left:0px;width:127px;top:7.0px">Used</div>
<div class="a" style="left:127px;top:0;width:1px;height:30px;background:#c4c4c4"></div>
<div class="t c" style="left:127px;width:128px;top:7.0px">Status</div>
<div class="a" style="left:255px;top:0;width:1px;height:30px;background:#c4c4c4"></div>
<div class="t c" style="left:255px;width:127px;top:7.0px">Phase</div>
<div class="a" style="left:382px;top:0;width:1px;height:30px;background:#c4c4c4"></div>
<div class="t c" style="left:382px;width:127px;top:7.0px">Net</div>
<div class="a" style="left:509px;top:0;width:1px;height:30px;background:#c4c4c4"></div>
<div class="t r" style="left:509px;width:123px;top:7.0px">Sta</div>
<div class="a" style="left:636px;top:0;width:1px;height:30px;background:#c4c4c4"></div>
<div class="t r" style="left:636px;width:123px;top:7.0px">Loc/Cha</div>
<div class="a" style="left:763px;top:0;width:1px;height:30px;background:#c4c4c4"></div>
<div class="t r" style="left:763px;width:123px;top:7.0px">Timeres (s)</div>
<div class="a" style="left:890px;top:0;width:1px;height:30px;background:#c4c4c4"></div>
<div class="t r" style="left:890px;width:105px;top:7.0px">Dis (°)</div>
<svg class="a" style="left:1001px;top:10px" width="12" height="10" viewBox="0 0 12 10"><polyline points="1.5,7.5 6,3 10.5,7.5" fill="none" stroke="#222" stroke-width="1.4"/></svg>
<div class="a" style="left:1017px;top:0;width:1px;height:30px;background:#c4c4c4"></div>
<div class="t" style="left:1021px;top:7.0px">Az (°)</div>
<div class="a" style="left:1144px;top:0;width:1px;height:30px;background:#c4c4c4"></div>
<div class="t" style="left:1148px;top:7.0px">Time (UTC)</div>
<div class="a" style="left:1271px;top:0;width:1px;height:30px;background:#c4c4c4"></div>
<div class="t" style="left:1275px;top:7.0px">+/- (s)</div>
<div class="a" style="left:1400px;top:0;width:20px;height:268px;background:#fff"></div>
<div class="a" style="left:1406px;top:6px;width:8px;height:71px;background:#c4c4c4;border:1px solid #9a9a9a;border-radius:4px"></div>
<div class="a" style="left:0;top:31px;width:1399px;height:31px;background:#ffffff;border-bottom:1px solid #c8c8c8"></div>
<div class="a" style="left:0;top:31px;width:9px;height:30px;background:#a10000"></div>
<div class="a" style="left:127px;top:31px;width:1px;height:31px;background:#c8c8c8"></div>
<div class="a" style="left:255px;top:31px;width:1px;height:31px;background:#c8c8c8"></div>
<div class="a" style="left:382px;top:31px;width:1px;height:31px;background:#c8c8c8"></div>
<div class="a" style="left:509px;top:31px;width:1px;height:31px;background:#c8c8c8"></div>
<div class="a" style="left:636px;top:31px;width:1px;height:31px;background:#c8c8c8"></div>
<div class="a" style="left:763px;top:31px;width:1px;height:31px;background:#c8c8c8"></div>
<div class="a" style="left:890px;top:31px;width:1px;height:31px;background:#c8c8c8"></div>
<div class="a" style="left:1017px;top:31px;width:1px;height:31px;background:#c8c8c8"></div>
<div class="a" style="left:1144px;top:31px;width:1px;height:31px;background:#c8c8c8"></div>
<div class="a" style="left:1271px;top:31px;width:1px;height:31px;background:#c8c8c8"></div>
<div class="a" style="left:15px;top:38px;width:16.5px;height:16.5px;background:#bad7ee;border:1.5px solid #3d97d8;border-radius:3px"></div>
<svg class="a" style="left:15px;top:38px" width="17" height="17" viewBox="0 0 17 17"><polyline points="3.8,8.6 7,11.8 13.2,5.2" fill="none" stroke="#111" stroke-width="2.2" stroke-linecap="round" stroke-linejoin="round"/></svg>
<div class="t" style="left:38px;top:38.09999999999995px;color:#333">T</div>
<div class="a" style="left:54px;top:48.5px;width:5px;height:1px;background:#a0a0a0"></div>
<div class="a" style="left:68px;top:48.5px;width:5px;height:1px;background:#a0a0a0"></div>
<div class="t c" style="left:127px;width:128px;top:38.09999999999995px">A&lt;A&gt;</div>
<div class="t c" style="left:255px;width:127px;top:38.09999999999995px">P</div>
<div class="t c" style="left:382px;width:127px;top:38.09999999999995px">CX</div>
<div class="t r" style="left:509px;width:123px;top:38.09999999999995px">PB01</div>
<div class="t r" style="left:636px;width:123px;top:38.09999999999995px">HHZ</div>
<div class="t r" style="left:763px;width:123px;top:38.09999999999995px">-0.48</div>
<div class="t r" style="left:890px;width:123px;top:38.09999999999995px">0.73</div>
<div class="t" style="left:1021px;top:38.09999999999995px">276</div>
<div class="t" style="left:1148px;top:38.09999999999995px">16:24:03.9</div>
<div class="a" style="left:0;top:62px;width:1399px;height:31px;background:#f7f7f7;border-bottom:1px solid #c8c8c8"></div>
<div class="a" style="left:0;top:62px;width:9px;height:30px;background:#a10000"></div>
<div class="a" style="left:127px;top:62px;width:1px;height:31px;background:#c8c8c8"></div>
<div class="a" style="left:255px;top:62px;width:1px;height:31px;background:#c8c8c8"></div>
<div class="a" style="left:382px;top:62px;width:1px;height:31px;background:#c8c8c8"></div>
<div class="a" style="left:509px;top:62px;width:1px;height:31px;background:#c8c8c8"></div>
<div class="a" style="left:636px;top:62px;width:1px;height:31px;background:#c8c8c8"></div>
<div class="a" style="left:763px;top:62px;width:1px;height:31px;background:#c8c8c8"></div>
<div class="a" style="left:890px;top:62px;width:1px;height:31px;background:#c8c8c8"></div>
<div class="a" style="left:1017px;top:62px;width:1px;height:31px;background:#c8c8c8"></div>
<div class="a" style="left:1144px;top:62px;width:1px;height:31px;background:#c8c8c8"></div>
<div class="a" style="left:1271px;top:62px;width:1px;height:31px;background:#c8c8c8"></div>
<div class="a" style="left:15px;top:69px;width:16.5px;height:16.5px;background:#bad7ee;border:1.5px solid #3d97d8;border-radius:3px"></div>
<svg class="a" style="left:15px;top:69px" width="17" height="17" viewBox="0 0 17 17"><polyline points="3.8,8.6 7,11.8 13.2,5.2" fill="none" stroke="#111" stroke-width="2.2" stroke-linecap="round" stroke-linejoin="round"/></svg>
<div class="t" style="left:38px;top:69.09999999999995px;color:#333">T</div>
<div class="a" style="left:54px;top:79.5px;width:5px;height:1px;background:#a0a0a0"></div>
<div class="a" style="left:68px;top:79.5px;width:5px;height:1px;background:#a0a0a0"></div>
<div class="t c" style="left:127px;width:128px;top:69.09999999999995px">A&lt;L&gt;</div>
<div class="t c" style="left:255px;width:127px;top:69.09999999999995px">S</div>
<div class="t c" style="left:382px;width:127px;top:69.09999999999995px">CX</div>
<div class="t r" style="left:509px;width:123px;top:69.09999999999995px">PB01</div>
<div class="t r" style="left:636px;width:123px;top:69.09999999999995px">HHN</div>
<div class="t r" style="left:763px;width:123px;top:69.09999999999995px">-0.58</div>
<div class="t r" style="left:890px;width:123px;top:69.09999999999995px">0.73</div>
<div class="t" style="left:1021px;top:69.09999999999995px">276</div>
<div class="t" style="left:1148px;top:69.09999999999995px">16:24:21.3</div>
<div class="a" style="left:0;top:93px;width:1399px;height:31px;background:#ffffff;border-bottom:1px solid #c8c8c8"></div>
<div class="a" style="left:0;top:93px;width:9px;height:30px;background:#a10000"></div>
<div class="a" style="left:127px;top:93px;width:1px;height:31px;background:#c8c8c8"></div>
<div class="a" style="left:255px;top:93px;width:1px;height:31px;background:#c8c8c8"></div>
<div class="a" style="left:382px;top:93px;width:1px;height:31px;background:#c8c8c8"></div>
<div class="a" style="left:509px;top:93px;width:1px;height:31px;background:#c8c8c8"></div>
<div class="a" style="left:636px;top:93px;width:1px;height:31px;background:#c8c8c8"></div>
<div class="a" style="left:763px;top:93px;width:1px;height:31px;background:#c8c8c8"></div>
<div class="a" style="left:890px;top:93px;width:1px;height:31px;background:#c8c8c8"></div>
<div class="a" style="left:1017px;top:93px;width:1px;height:31px;background:#c8c8c8"></div>
<div class="a" style="left:1144px;top:93px;width:1px;height:31px;background:#c8c8c8"></div>
<div class="a" style="left:1271px;top:93px;width:1px;height:31px;background:#c8c8c8"></div>
<div class="a" style="left:15px;top:100px;width:16.5px;height:16.5px;background:#bad7ee;border:1.5px solid #3d97d8;border-radius:3px"></div>
<svg class="a" style="left:15px;top:100px" width="17" height="17" viewBox="0 0 17 17"><polyline points="3.8,8.6 7,11.8 13.2,5.2" fill="none" stroke="#111" stroke-width="2.2" stroke-linecap="round" stroke-linejoin="round"/></svg>
<div class="t" style="left:38px;top:100.09999999999995px;color:#333">T</div>
<div class="a" style="left:54px;top:110.5px;width:5px;height:1px;background:#a0a0a0"></div>
<div class="a" style="left:68px;top:110.5px;width:5px;height:1px;background:#a0a0a0"></div>
<div class="t c" style="left:127px;width:128px;top:100.09999999999995px">A&lt;A&gt;</div>
<div class="t c" style="left:255px;width:127px;top:100.09999999999995px">P</div>
<div class="t c" style="left:382px;width:127px;top:100.09999999999995px">CX</div>
<div class="t r" style="left:509px;width:123px;top:100.09999999999995px">PB09</div>
<div class="t r" style="left:636px;width:123px;top:100.09999999999995px">HHZ</div>
<div class="t r" style="left:763px;width:123px;top:100.09999999999995px">-0.04</div>
<div class="t r" style="left:890px;width:123px;top:100.09999999999995px">0.82</div>
<div class="t" style="left:1021px;top:100.09999999999995px">216</div>
<div class="t" style="left:1148px;top:100.09999999999995px">16:24:05.0</div>
<div class="a" style="left:0;top:124px;width:1399px;height:31px;background:#f7f7f7;border-bottom:1px solid #c8c8c8"></div>
<div class="a" style="left:0;top:124px;width:9px;height:30px;background:#a10000"></div>
<div class="a" style="left:127px;top:124px;width:1px;height:31px;background:#c8c8c8"></div>
<div class="a" style="left:255px;top:124px;width:1px;height:31px;background:#c8c8c8"></div>
<div class="a" style="left:382px;top:124px;width:1px;height:31px;background:#c8c8c8"></div>
<div class="a" style="left:509px;top:124px;width:1px;height:31px;background:#c8c8c8"></div>
<div class="a" style="left:636px;top:124px;width:1px;height:31px;background:#c8c8c8"></div>
<div class="a" style="left:763px;top:124px;width:1px;height:31px;background:#c8c8c8"></div>
<div class="a" style="left:890px;top:124px;width:1px;height:31px;background:#c8c8c8"></div>
<div class="a" style="left:1017px;top:124px;width:1px;height:31px;background:#c8c8c8"></div>
<div class="a" style="left:1144px;top:124px;width:1px;height:31px;background:#c8c8c8"></div>
<div class="a" style="left:1271px;top:124px;width:1px;height:31px;background:#c8c8c8"></div>
<div class="a" style="left:15px;top:131px;width:16.5px;height:16.5px;background:#bad7ee;border:1.5px solid #3d97d8;border-radius:3px"></div>
<svg class="a" style="left:15px;top:131px" width="17" height="17" viewBox="0 0 17 17"><polyline points="3.8,8.6 7,11.8 13.2,5.2" fill="none" stroke="#111" stroke-width="2.2" stroke-linecap="round" stroke-linejoin="round"/></svg>
<div class="t" style="left:38px;top:131.09999999999997px;color:#333">T</div>
<div class="a" style="left:54px;top:141.5px;width:5px;height:1px;background:#a0a0a0"></div>
<div class="a" style="left:68px;top:141.5px;width:5px;height:1px;background:#a0a0a0"></div>
<div class="t c" style="left:127px;width:128px;top:131.09999999999997px">A&lt;L&gt;</div>
<div class="t c" style="left:255px;width:127px;top:131.09999999999997px">S</div>
<div class="t c" style="left:382px;width:127px;top:131.09999999999997px">CX</div>
<div class="t r" style="left:509px;width:123px;top:131.09999999999997px">PB09</div>
<div class="t r" style="left:636px;width:123px;top:131.09999999999997px">HHN</div>
<div class="t r" style="left:763px;width:123px;top:131.09999999999997px">0.20</div>
<div class="t r" style="left:890px;width:123px;top:131.09999999999997px">0.82</div>
<div class="t" style="left:1021px;top:131.09999999999997px">216</div>
<div class="t" style="left:1148px;top:131.09999999999997px">16:24:23.4</div>
<div class="a" style="left:0;top:155px;width:1399px;height:31px;background:#ffffff;border-bottom:1px solid #c8c8c8"></div>
<div class="a" style="left:0;top:155px;width:9px;height:30px;background:#a10000"></div>
<div class="a" style="left:127px;top:155px;width:1px;height:31px;background:#c8c8c8"></div>
<div class="a" style="left:255px;top:155px;width:1px;height:31px;background:#c8c8c8"></div>
<div class="a" style="left:382px;top:155px;width:1px;height:31px;background:#c8c8c8"></div>
<div class="a" style="left:509px;top:155px;width:1px;height:31px;background:#c8c8c8"></div>
<div class="a" style="left:636px;top:155px;width:1px;height:31px;background:#c8c8c8"></div>
<div class="a" style="left:763px;top:155px;width:1px;height:31px;background:#c8c8c8"></div>
<div class="a" style="left:890px;top:155px;width:1px;height:31px;background:#c8c8c8"></div>
<div class="a" style="left:1017px;top:155px;width:1px;height:31px;background:#c8c8c8"></div>
<div class="a" style="left:1144px;top:155px;width:1px;height:31px;background:#c8c8c8"></div>
<div class="a" style="left:1271px;top:155px;width:1px;height:31px;background:#c8c8c8"></div>
<div class="a" style="left:15px;top:162px;width:16.5px;height:16.5px;background:#bad7ee;border:1.5px solid #3d97d8;border-radius:3px"></div>
<svg class="a" style="left:15px;top:162px" width="17" height="17" viewBox="0 0 17 17"><polyline points="3.8,8.6 7,11.8 13.2,5.2" fill="none" stroke="#111" stroke-width="2.2" stroke-linecap="round" stroke-linejoin="round"/></svg>
<div class="t" style="left:38px;top:162.09999999999997px;color:#333">T</div>
<div class="a" style="left:54px;top:172.5px;width:5px;height:1px;background:#a0a0a0"></div>
<div class="a" style="left:68px;top:172.5px;width:5px;height:1px;background:#a0a0a0"></div>
<div class="t c" style="left:127px;width:128px;top:162.09999999999997px">A&lt;A&gt;</div>
<div class="t c" style="left:255px;width:127px;top:162.09999999999997px">P</div>
<div class="t c" style="left:382px;width:127px;top:162.09999999999997px">CX</div>
<div class="t r" style="left:509px;width:123px;top:162.09999999999997px">PB08</div>
<div class="t r" style="left:636px;width:123px;top:162.09999999999997px">HHZ</div>
<div class="t r" style="left:763px;width:123px;top:162.09999999999997px">0.07</div>
<div class="t r" style="left:890px;width:123px;top:162.09999999999997px">1.07</div>
<div class="t" style="left:1021px;top:162.09999999999997px">337</div>
<div class="t" style="left:1148px;top:162.09999999999997px">16:24:07.2</div>
<div class="a" style="left:0;top:186px;width:1399px;height:31px;background:#f7f7f7;border-bottom:1px solid #c8c8c8"></div>
<div class="a" style="left:0;top:186px;width:9px;height:30px;background:#a10000"></div>
<div class="a" style="left:127px;top:186px;width:1px;height:31px;background:#c8c8c8"></div>
<div class="a" style="left:255px;top:186px;width:1px;height:31px;background:#c8c8c8"></div>
<div class="a" style="left:382px;top:186px;width:1px;height:31px;background:#c8c8c8"></div>
<div class="a" style="left:509px;top:186px;width:1px;height:31px;background:#c8c8c8"></div>
<div class="a" style="left:636px;top:186px;width:1px;height:31px;background:#c8c8c8"></div>
<div class="a" style="left:763px;top:186px;width:1px;height:31px;background:#c8c8c8"></div>
<div class="a" style="left:890px;top:186px;width:1px;height:31px;background:#c8c8c8"></div>
<div class="a" style="left:1017px;top:186px;width:1px;height:31px;background:#c8c8c8"></div>
<div class="a" style="left:1144px;top:186px;width:1px;height:31px;background:#c8c8c8"></div>
<div class="a" style="left:1271px;top:186px;width:1px;height:31px;background:#c8c8c8"></div>
<div class="a" style="left:15px;top:193px;width:16.5px;height:16.5px;background:#bad7ee;border:1.5px solid #3d97d8;border-radius:3px"></div>
<svg class="a" style="left:15px;top:193px" width="17" height="17" viewBox="0 0 17 17"><polyline points="3.8,8.6 7,11.8 13.2,5.2" fill="none" stroke="#111" stroke-width="2.2" stroke-linecap="round" stroke-linejoin="round"/></svg>
<div class="t" style="left:38px;top:193.09999999999997px;color:#333">T</div>
<div class="a" style="left:54px;top:203.5px;width:5px;height:1px;background:#a0a0a0"></div>
<div class="a" style="left:68px;top:203.5px;width:5px;height:1px;background:#a0a0a0"></div>
<div class="t c" style="left:127px;width:128px;top:193.09999999999997px">A&lt;L&gt;</div>
<div class="t c" style="left:255px;width:127px;top:193.09999999999997px">S</div>
<div class="t c" style="left:382px;width:127px;top:193.09999999999997px">CX</div>
<div class="t r" style="left:509px;width:123px;top:193.09999999999997px">PB08</div>
<div class="t r" style="left:636px;width:123px;top:193.09999999999997px">HHN</div>
<div class="t r" style="left:763px;width:123px;top:193.09999999999997px">-0.16</div>
<div class="t r" style="left:890px;width:123px;top:193.09999999999997px">1.07</div>
<div class="t" style="left:1021px;top:193.09999999999997px">337</div>
<div class="t" style="left:1148px;top:193.09999999999997px">16:24:26.6</div>
<div class="a" style="left:0;top:217px;width:1399px;height:31px;background:#ffffff;border-bottom:1px solid #c8c8c8"></div>
<div class="a" style="left:0;top:217px;width:9px;height:30px;background:#a10000"></div>
<div class="a" style="left:127px;top:217px;width:1px;height:31px;background:#c8c8c8"></div>
<div class="a" style="left:255px;top:217px;width:1px;height:31px;background:#c8c8c8"></div>
<div class="a" style="left:382px;top:217px;width:1px;height:31px;background:#c8c8c8"></div>
<div class="a" style="left:509px;top:217px;width:1px;height:31px;background:#c8c8c8"></div>
<div class="a" style="left:636px;top:217px;width:1px;height:31px;background:#c8c8c8"></div>
<div class="a" style="left:763px;top:217px;width:1px;height:31px;background:#c8c8c8"></div>
<div class="a" style="left:890px;top:217px;width:1px;height:31px;background:#c8c8c8"></div>
<div class="a" style="left:1017px;top:217px;width:1px;height:31px;background:#c8c8c8"></div>
<div class="a" style="left:1144px;top:217px;width:1px;height:31px;background:#c8c8c8"></div>
<div class="a" style="left:1271px;top:217px;width:1px;height:31px;background:#c8c8c8"></div>
<div class="a" style="left:15px;top:224px;width:16.5px;height:16.5px;background:#bad7ee;border:1.5px solid #3d97d8;border-radius:3px"></div>
<svg class="a" style="left:15px;top:224px" width="17" height="17" viewBox="0 0 17 17"><polyline points="3.8,8.6 7,11.8 13.2,5.2" fill="none" stroke="#111" stroke-width="2.2" stroke-linecap="round" stroke-linejoin="round"/></svg>
<div class="t" style="left:38px;top:224.09999999999997px;color:#333">T</div>
<div class="a" style="left:54px;top:234.5px;width:5px;height:1px;background:#a0a0a0"></div>
<div class="a" style="left:68px;top:234.5px;width:5px;height:1px;background:#a0a0a0"></div>
<div class="t c" style="left:127px;width:128px;top:224.09999999999997px">A&lt;A&gt;</div>
<div class="t c" style="left:255px;width:127px;top:224.09999999999997px">P</div>
<div class="t c" style="left:382px;width:127px;top:224.09999999999997px">CX</div>
<div class="t r" style="left:509px;width:123px;top:224.09999999999997px">PB02</div>
<div class="t r" style="left:636px;width:123px;top:224.09999999999997px">HHZ</div>
<div class="t r" style="left:763px;width:123px;top:224.09999999999997px">0.42</div>
<div class="t r" style="left:890px;width:123px;top:224.09999999999997px">1.12</div>
<div class="t" style="left:1021px;top:224.09999999999997px">260</div>
<div class="t" style="left:1148px;top:224.09999999999997px">16:24:07.9</div>
<div class="a" style="left:0;top:248px;width:1399px;height:31px;background:#f7f7f7;border-bottom:1px solid #c8c8c8"></div>
<div class="a" style="left:0;top:248px;width:9px;height:30px;background:#a10000"></div>
<div class="a" style="left:127px;top:248px;width:1px;height:31px;background:#c8c8c8"></div>
<div class="a" style="left:255px;top:248px;width:1px;height:31px;background:#c8c8c8"></div>
<div class="a" style="left:382px;top:248px;width:1px;height:31px;background:#c8c8c8"></div>
<div class="a" style="left:509px;top:248px;width:1px;height:31px;background:#c8c8c8"></div>
<div class="a" style="left:636px;top:248px;width:1px;height:31px;background:#c8c8c8"></div>
<div class="a" style="left:763px;top:248px;width:1px;height:31px;background:#c8c8c8"></div>
<div class="a" style="left:890px;top:248px;width:1px;height:31px;background:#c8c8c8"></div>
<div class="a" style="left:1017px;top:248px;width:1px;height:31px;background:#c8c8c8"></div>
<div class="a" style="left:1144px;top:248px;width:1px;height:31px;background:#c8c8c8"></div>
<div class="a" style="left:1271px;top:248px;width:1px;height:31px;background:#c8c8c8"></div>
<div class="a" style="left:15px;top:255px;width:16.5px;height:16.5px;background:#bad7ee;border:1.5px solid #3d97d8;border-radius:3px"></div>
<svg class="a" style="left:15px;top:255px" width="17" height="17" viewBox="0 0 17 17"><polyline points="3.8,8.6 7,11.8 13.2,5.2" fill="none" stroke="#111" stroke-width="2.2" stroke-linecap="round" stroke-linejoin="round"/></svg>
<div class="t" style="left:38px;top:255.09999999999997px;color:#333">T</div>
<div class="a" style="left:54px;top:265.5px;width:5px;height:1px;background:#a0a0a0"></div>
<div class="a" style="left:68px;top:265.5px;width:5px;height:1px;background:#a0a0a0"></div>
<div class="t c" style="left:127px;width:128px;top:255.09999999999997px">A&lt;L&gt;</div>
<div class="t c" style="left:255px;width:127px;top:255.09999999999997px">S</div>
<div class="t c" style="left:382px;width:127px;top:255.09999999999997px">CX</div>
<div class="t r" style="left:509px;width:123px;top:255.09999999999997px">PB02</div>
<div class="t r" style="left:636px;width:123px;top:255.09999999999997px">HHN</div>
<div class="t r" style="left:763px;width:123px;top:255.09999999999997px">0.40</div>
<div class="t r" style="left:890px;width:123px;top:255.09999999999997px">1.12</div>
<div class="t" style="left:1021px;top:255.09999999999997px">260</div>
<div class="t" style="left:1148px;top:255.09999999999997px">16:24:27.9</div>
</div>
<div class="a" style="left:11px;top:791px;width:150px;height:31px;background:#efefef;border:1px solid #b0b0b0;border-radius:3px"></div>
<div class="t" style="left:18px;top:798.3px;color:#1a1a1a;">LOCSAT</div>
<svg class="a" style="left:144px;top:803px" width="12" height="8" viewBox="0 0 12 8"><polyline points="1,1.5 6.0,6.5 11,1.5" fill="none" stroke="#333" stroke-width="1.3"/></svg>
<svg class="a" style="left:174px;top:797px" width="22" height="22" viewBox="0 0 22 22"><path d="M15.2,2.2 a5.2,5.2 0 0 0 -5.6,6.6 L2.8,15.6 a1.9,1.9 0 0 0 2.7,2.7 L12.3,11.5 a5.2,5.2 0 0 0 6.6,-5.6 L16.4,8.4 L14.1,7.9 L13.6,5.6 Z" fill="#111"/><circle cx="4.2" cy="16.9" r="0.9" fill="#f3f3f3"/></svg>
<div class="t" style="left:230px;top:798.3px;color:#232323;">Profile:</div>
<div class="a" style="left:285px;top:791px;width:176px;height:31px;background:#efefef;border:1px solid #b0b0b0;border-radius:3px"></div>
<div class="t" style="left:291px;top:798.3px;color:#1a1a1a;">iasp91_scanloc</div>
<svg class="a" style="left:443px;top:803px" width="12" height="8" viewBox="0 0 12 8"><polyline points="1,1.5 6.0,6.5 11,1.5" fill="none" stroke="#333" stroke-width="1.3"/></svg>
<div class="a" style="left:490px;top:798px;width:16px;height:16px;background:#ffffff;border:1px solid #9a9a9a;border-radius:3px"></div>
<div class="t" style="left:512px;top:798.3px;color:#232323;">Fix depth</div>
<div class="a" style="left:585px;top:791px;width:186px;height:31px;background:#ececec;border:1px solid #d8d8d8;border-radius:3px"></div>
<div class="t r" style="right:679px;top:798.3px;color:#a9a9a9">149.256</div>
<div class="t" style="left:778px;top:800.3px;color:#232323;">km</div>
<div class="a" style="left:827px;top:798px;width:16px;height:16px;background:#f0f0f0;border:1px solid #d4d4d4;border-radius:3px"></div>
<div class="t" style="left:849px;top:798.3px;color:#b4b4b4;">Distance cutoff</div>
<div class="a" style="left:962px;top:791px;width:58px;height:31px;background:#ececec;border:1px solid #d8d8d8;border-radius:3px"></div>
<div class="t r" style="right:429px;top:798.3px;color:#a9a9a9">1000</div>
<div class="t" style="left:1027px;top:800.3px;color:#232323;">km</div>
<div class="a" style="left:1076px;top:798px;width:16px;height:16px;background:#ffffff;border:1px solid #9a9a9a;border-radius:3px"></div>
<div class="t" style="left:1098px;top:798.3px;color:#232323;">Ignore initial location</div>
<svg class="a" style="left:1395px;top:790px" width="35" height="35" viewBox="1395 790 35 35"><path d="M1402.9,798.9 H1421 V818 L1415.5,813 H1402.9 Z" fill="none" stroke="#111" stroke-width="1.8" stroke-linejoin="round"/><line x1="1405.5" y1="804.2" x2="1418.5" y2="804.2" stroke="#111" stroke-width="1.7"/><line x1="1405.5" y1="808.4" x2="1418.5" y2="808.4" stroke="#111" stroke-width="1.7"/></svg>
<div class="a" style="left:11px;top:832px;width:78px;height:33px;background:#efefef;border:1px solid #b0b0b0;border-radius:3px"></div>
<div class="t" style="left:21px;top:839.3px;color:#1a1a1a;">Relocate</div>
<div class="a" style="left:489px;top:833px;width:329px;height:31px;background:#ececec;border:1px solid #d8d8d8;border-radius:3px"></div>
<div class="t" style="left:495px;top:839.3px;color:#b4b4b4;">depth type set by locator</div>
<svg class="a" style="left:800px;top:845px" width="12" height="8" viewBox="0 0 12 8"><polyline points="1,1.5 6.0,6.5 11,1.5" fill="none" stroke="#b8b8b8" stroke-width="1.3"/></svg>
<div class="a" style="left:1002px;top:832px;width:61px;height:33px;background:#efefef;border:1px solid #b0b0b0;border-radius:3px"></div>
<div class="t" style="left:1012px;top:839.3px;color:#1a1a1a;">Picker</div>
<div class="a" style="left:1071px;top:832px;width:103px;height:33px;background:#efefef;border:1px solid #b0b0b0;border-radius:3px"></div>
<div class="t" style="left:1081px;top:839.3px;color:#1a1a1a;">Import picks</div>
<div class="a" style="left:1182px;top:832px;width:164px;height:33px;background:#ececec;border:1px solid #d8d8d8;border-radius:3px"></div>
<div class="t" style="left:1192px;top:839.3px;color:#b4b4b4;">Compute magnitudes</div>
<div class="a" style="left:1354px;top:832px;width:75px;height:33px;background:#efefef;border:1px solid #b0b0b0;border-radius:3px"></div>
<div class="t" style="left:1365px;top:839.3px;color:#1a1a1a;">Commit</div>
<svg class="a" style="left:1419px;top:857px" width="9" height="7" viewBox="0 0 9 7"><polyline points="1.5,1.8 4.5,4.6 7.5,1.8" fill="none" stroke="#333" stroke-width="1.2"/></svg>
<svg class="a" style="left:1398px;top:876px" width="24" height="24" viewBox="1398 876 24 24"><g transform="rotate(-45 1410.5 888)"><rect x="1406.5" y="877.5" width="8" height="9" rx="2" fill="#111"/><rect x="1408" y="875.5" width="1.8" height="3" fill="#111"/><rect x="1411.2" y="875.5" width="1.8" height="3" fill="#111"/><rect x="1406.5" y="889.5" width="8" height="9" rx="2" fill="#111"/><rect x="1409.6" y="898" width="1.8" height="3" fill="#111"/></g><line x1="1403" y1="895.5" x2="1418" y2="880.5" stroke="#efefef" stroke-width="4.5"/><line x1="1404" y1="894.5" x2="1417" y2="881.5" stroke="#111" stroke-width="1.8"/></svg>
</body></html>
